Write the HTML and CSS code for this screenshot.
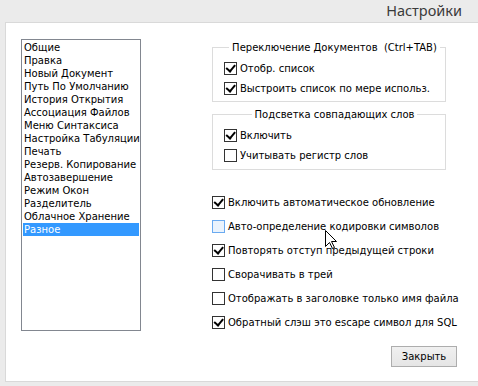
FILE: index.html
```html
<!DOCTYPE html>
<html lang="ru">
<head>
    <meta charset="UTF-8">
    <title>Настройки</title>
    <link rel="stylesheet" href="styles.css">
</head>
<body>
    <div class="titlebar">
        <span class="title">Настройки</span>
    </div>

    <div class="panel">
        <ul class="category-list">
            <li>Общие</li>
            <li>Правка</li>
            <li>Новый Документ</li>
            <li>Путь По Умолчанию</li>
            <li>История Открытия</li>
            <li>Ассоциация Файлов</li>
            <li>Меню Синтаксиса</li>
            <li>Настройка Табуляции</li>
            <li>Печать</li>
            <li>Резерв. Копирование</li>
            <li>Автозавершение</li>
            <li>Режим Окон</li>
            <li>Разделитель</li>
            <li>Облачное Хранение</li>
            <li class="selected">Разное</li>
        </ul>

        <div class="options">
            <fieldset class="group">
                <legend>Переключение Документов&nbsp; (Ctrl+TAB)</legend>
                <label class="check"><span class="box checked"></span>Отобр. список</label>
                <label class="check"><span class="box checked"></span>Выстроить список по мере использ.</label>
            </fieldset>

            <fieldset class="group group-words">
                <legend>Подсветка совпадающих слов</legend>
                <label class="check"><span class="box checked"></span>Включить</label>
                <label class="check"><span class="box"></span>Учитывать регистр слов</label>
            </fieldset>

            <div class="standalone">
                <label class="check"><span class="box checked"></span>Включить автоматическое обновление</label>
                <label class="check"><span class="box hover"></span>Авто-определение кодировки символов</label>
                <label class="check"><span class="box checked"></span>Повторять отступ предыдущей строки</label>
                <label class="check"><span class="box"></span>Сворачивать в трей</label>
                <label class="check"><span class="box"></span>Отображать в заголовке только имя файла</label>
                <label class="check"><span class="box checked"></span>Обратный слэш это escape символ для SQL</label>
            </div>

            <div class="actions">
                <button class="btn">Закрыть</button>
            </div>
        </div>
    </div>

    <!-- mouse pointer hovering the second option -->
    <svg class="cursor" width="13" height="20" viewBox="0 0 13 20">
        <path d="M0.5 0.5 L0.5 16.5 L4.5 12.5 L7.5 18.5 L9.5 17.5 L6.5 11.5 L11.5 11.5 Z" fill="#fff" stroke="#000" stroke-width="1"/>
    </svg>
</body>
</html>
```

FILE: styles.css
```css
* {
    margin: 0;
    padding: 0;
    box-sizing: border-box;
}

body {
    background: #ebebeb;
    font-family: 'DejaVu Sans', Verdana, sans-serif;
    font-size: 10px;
    color: #000;
    overflow: hidden;
    height: 386px;
}

.titlebar {
    height: 22px;
    display: flex;
    justify-content: flex-end;
    padding-right: 16px;
}

.title {
    font-family: 'Noto Sans', 'Open Sans', sans-serif;
    font-size: 14.5px;
    line-height: 20px;
    color: #3a3a3a;
}

.panel {
    display: flex;
    align-items: flex-start;
    margin-left: 5px;
    width: 490px;
    height: 360px;
    background: #fff;
    border: 1px solid #d9d9d9;
    padding: 16px 0 0 15px;
}

.category-list {
    list-style: none;
    width: 120px;
    height: 292px;
    border: 1px solid #828790;
    padding: 1px;
    flex: none;
}

.category-list li {
    line-height: 13px;
    height: 13px;
    padding-left: 1px;
    white-space: nowrap;
}

.category-list li.selected {
    background: #3399ff;
    color: #fff;
}

.options {
    margin-left: 71px;
    margin-top: 2px;
    width: 245px;
}

.group {
    width: 234px;
    border: 1px solid #dcdcdc;
    padding: 4px 0 3px 11px;
}

.group legend {
    margin: 0 auto;
    padding: 0 3px;
    line-height: 13px;
    white-space: nowrap;
}

.group-words {
    margin-top: 6px;
    padding-bottom: 4px;
}

.check {
    display: flex;
    align-items: center;
    height: 20px;
    white-space: nowrap;
}

.box {
    flex: none;
    width: 13px;
    height: 13px;
    border: 1px solid #333;
    background: #fff;
    margin-right: 3px;
    position: relative;
}

.box.checked::after {
    content: '';
    position: absolute;
    left: 2px;
    top: 0px;
    width: 4px;
    height: 7px;
    border-right: 2px solid #000;
    border-bottom: 2px solid #000;
    transform: rotate(40deg);
    transform-origin: 60% 60%;
}

.box.hover {
    border-color: #6aaaf0;
    background: #eaf3fd;
}

.standalone {
    margin-top: 20px;
}

.standalone .check {
    height: 24px;
}

.actions {
    display: flex;
    justify-content: flex-end;
    margin-top: 12px;
}

.btn {
    width: 66px;
    height: 21px;
    font-family: inherit;
    font-size: 10px;
    color: #000;
    background: linear-gradient(#f0f0f0, #e5e5e5);
    border: 1px solid #adadad;
}

.cursor {
    position: absolute;
    left: 325px;
    top: 230px;
}
```
